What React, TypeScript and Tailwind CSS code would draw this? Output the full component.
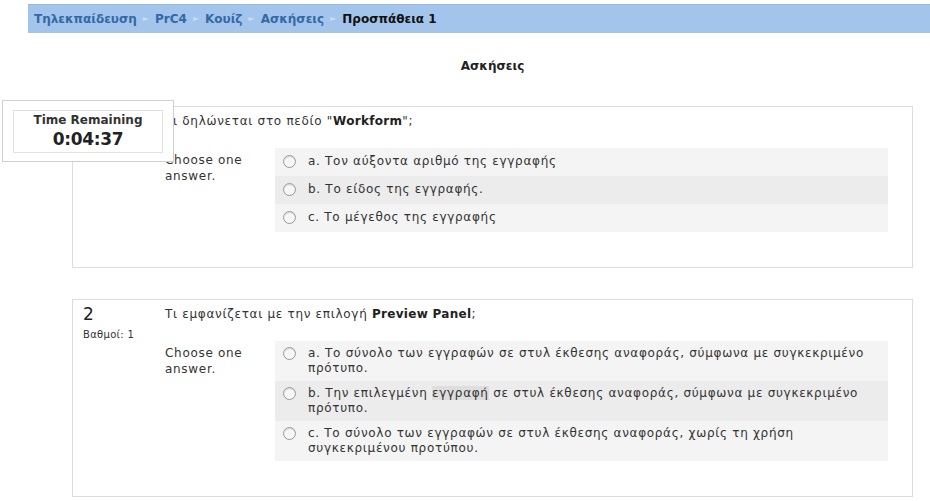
import React from 'react';

type Choice = { key: string; text: React.ReactNode };

function Radio() {
  return (
    <span className="mt-[1px] block h-[13px] w-[13px] shrink-0 rounded-full border border-[#9a9a9a] bg-[#f7f7f7] shadow-[inset_0_1px_1px_rgba(0,0,0,0.15)]" />
  );
}

function Question({
  num,
  prompt,
  choices,
  tall,
}: {
  num: string;
  prompt: React.ReactNode;
  choices: Choice[];
  tall?: boolean;
}) {
  return (
    <div className="flex border border-[#dcdcdc] bg-white pl-[10px] pr-[24px] pt-[7px] pb-[35px]">
      <div className="w-[82px] shrink-0">
        <div className="text-[17px] leading-[15px] text-[#222]">{num}</div>
        <div className="mt-[7px] text-[10px] leading-[12px] tracking-[0.3px] text-[#333]">Βαθμοί: 1</div>
      </div>
      <div className="flex-1 tracking-[0.7px]">
        <div className="leading-[15px]">{prompt}</div>
        <div className="mt-[19px] flex">
          <div className="w-[110px] shrink-0 pt-[4px] leading-[16px]">
            Choose one
            <br />
            answer.
          </div>
          <div className="flex-1">
            {choices.map((c, i) => (
              <div
                key={c.key}
                className={
                  (i % 2 === 1 ? 'bg-[#ececec] ' : 'bg-[#f4f4f4] ') +
                  (tall ? 'py-[5px] ' : 'py-[6px] ') +
                  'flex gap-[8px] pl-[8px] pr-[12px]'
                }
              >
                <Radio />
                <div className="min-h-[16px] flex-1 pl-[4px] leading-[15px]">
                  {c.key}. {c.text}
                </div>
              </div>
            ))}
          </div>
        </div>
      </div>
    </div>
  );
}

export default function App() {
  const crumbs = ['Τηλεκπαίδευση', 'PrC4', 'Κουίζ', 'Ασκήσεις'];

  return (
    <div
      className="relative h-[501px] w-[930px] overflow-hidden bg-white text-[12px] text-[#333]"
      style={{ fontFamily: '"DejaVu Sans", Verdana, sans-serif' }}
    >
      {/* breadcrumb */}
      <div className="ml-[28px] mt-[4px] flex h-[29px] items-center border-t border-[#9bb9dc] bg-[#a3c5ec] pl-[6px] font-bold">
        {crumbs.map((c) => (
          <React.Fragment key={c}>
            <span className="text-[#3468a6]">{c}</span>
            <span className="mx-[6px] text-[8px] text-[#c9dcf2]">►</span>
          </React.Fragment>
        ))}
        <span className="text-[#111]">Προσπάθεια 1</span>
      </div>

      <div className="ml-[72px] w-[841px]">
        <h2 className="mt-[26px] text-center text-[12px] font-bold leading-[15px] text-[#222]">
          Ασκήσεις
        </h2>

        <div className="mt-[32px]">
          <Question
            num="1"
            prompt={
              <>
                Τι δηλώνεται στο πεδίο "<b className="tracking-[0.3px] text-[#222]">Workform</b>";
              </>
            }
            choices={[
              { key: 'a', text: 'Τον αύξοντα αριθμό της εγγραφής' },
              { key: 'b', text: 'Το είδος της εγγραφής.' },
              { key: 'c', text: 'Το μέγεθος της εγγραφής' },
            ]}
          />
        </div>

        <div className="mt-[31px]">
          <Question
            num="2"
            tall
            prompt={
              <>
                Τι εμφανίζεται με την επιλογή <b className="tracking-[0.3px] text-[#222]">Preview Panel</b>;
              </>
            }
            choices={[
              {
                key: 'a',
                text: 'Το σύνολο των εγγραφών σε στυλ έκθεσης αναφοράς, σύμφωνα με συγκεκριμένο πρότυπο.',
              },
              {
                key: 'b',
                text: (
                  <>
                    Την επιλεγμένη <span className="bg-[#dedede]">εγγραφή</span> σε στυλ έκθεσης
                    αναφοράς, σύμφωνα με συγκεκριμένο πρότυπο.
                  </>
                ),
              },
              {
                key: 'c',
                text: 'Το σύνολο των εγγραφών σε στυλ έκθεσης αναφοράς, χωρίς τη χρήση συγκεκριμένου προτύπου.',
              },
            ]}
          />
        </div>
      </div>

      {/* floating timer */}
      <div className="absolute left-[2px] top-[100px] h-[62px] w-[172px] border border-[#cfcfcf] bg-white pl-[10px] pt-[9px]">
        <div className="flex h-[43px] w-[150px] flex-col items-center border border-[#e2e2e2] pt-[2px]">
          <div className="text-[12px] font-bold leading-[15px] text-[#333]">Time Remaining</div>
          <div className="text-[17px] font-bold leading-[22px] tracking-[-0.3px] text-[#222]">0:04:37</div>
        </div>
      </div>
    </div>
  );
}
